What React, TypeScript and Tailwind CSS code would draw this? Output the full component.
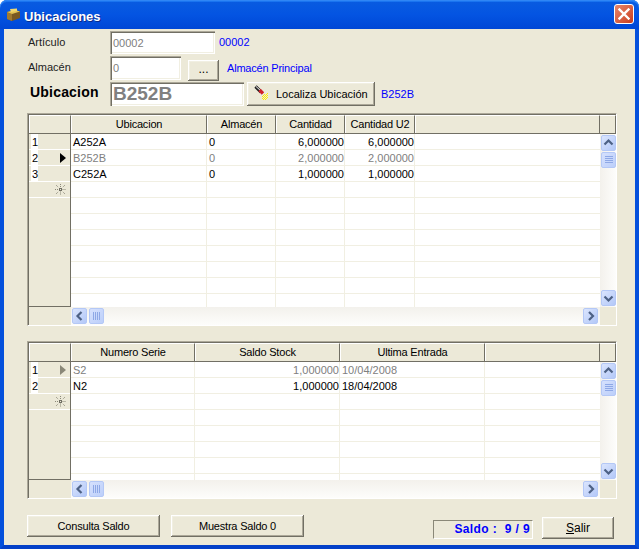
import React from "react";

const RAISED = "shadow-[inset_-1px_-1px_0_#716f64,inset_1px_1px_0_#ffffff,inset_-2px_-2px_0_#aca899,inset_2px_2px_0_#f1efe2]";
const SUNKEN = "shadow-[inset_1px_1px_0_#aca899,inset_2px_2px_0_#716f64,inset_-1px_-1px_0_#ffffff,inset_-2px_-2px_0_#f1efe2]";

type Col = { title: string; width: number; align?: "right" };
type Row = { cells: string[]; dim?: boolean };

function Chevron({ dir }: { dir: "up" | "down" | "left" | "right" }) {
  const d = {
    up: "M3.5 9.5 L7.5 5.5 L11.5 9.5",
    down: "M3.5 6.5 L7.5 10.5 L11.5 6.5",
    left: "M9.5 4 L5.5 8 L9.5 12",
    right: "M6 4 L10 8 L6 12",
  }[dir];
  return (
    <svg width="15" height="16" viewBox="0 0 15 16">
      <path d={d} fill="none" stroke="#4d6185" strokeWidth="2.2" />
    </svg>
  );
}

function ScrollBtn({ dir }: { dir: "up" | "down" | "left" | "right" }) {
  return (
    <div className="w-[15px] h-[16px] shrink-0 rounded-[2px] border border-[#b4c8f6] bg-gradient-to-br from-[#dbe5fd] to-[#b3c8f8] flex items-center justify-center overflow-hidden">
      <div className="shrink-0 -m-[1px]"><Chevron dir={dir} /></div>
    </div>
  );
}

function Thumb({ vertical }: { vertical?: boolean }) {
  return (
    <div className="w-[15px] h-[16px] shrink-0 rounded-[2px] border border-[#b4c8f6] bg-gradient-to-br from-[#d6e1fd] to-[#bccffa] flex items-center justify-center">
      <svg width="8" height="8" viewBox="0 0 8 8">
        {vertical
          ? [0, 2, 4, 6].map((y) => <rect key={y} x="0" y={y} width="8" height="1" fill="#8ea8e6" />)
          : [0, 2, 4, 6].map((x) => <rect key={x} x={x} y="0" width="1" height="8" fill="#8ea8e6" />)}
      </svg>
    </div>
  );
}

function Spark() {
  return (
    <svg width="11" height="11" viewBox="0 0 11 11">
      <g stroke="#8a8878" strokeWidth="1" strokeDasharray="1 1">
        <path d="M5.5 0V3.5M5.5 7.5V11M0 5.5H3.5M7.5 5.5H11M1 1L3.5 3.5M10 1L7.5 3.5M1 10L3.5 7.5M10 10L7.5 7.5" />
      </g>
      <rect x="4.5" y="4.5" width="2" height="2" fill="none" stroke="#716f64" strokeWidth="1" />
    </svg>
  );
}

function Indicator({ label, marker }: { label?: string; marker?: "black" | "gray" | "new" }) {
  return (
    <div className="h-[16px] shrink-0 border-b border-white flex items-center pl-[2px] pr-[4px] justify-between">
      {label ? <span className="bg-white w-[7px] h-[15px] leading-[16px] pl-[1px]">{label}</span> : <span />}
      {marker === "black" && <span className="w-0 h-0 border-y-[5px] border-y-transparent border-l-[6px] border-l-black" />}
      {marker === "gray" && <span className="w-0 h-0 border-y-[5px] border-y-transparent border-l-[6px] border-l-[#8a8878]" />}
      {marker === "new" && <Spark />}
    </div>
  );
}

function DataGrid({
  cols, rows, markers, height, emptyRows,
}: {
  cols: Col[]; rows: Row[]; markers: ("black" | "gray" | undefined)[]; height: string; emptyRows: number;
}) {
  const all: (Row | null)[] = [...rows, ...Array.from({ length: emptyRows }, () => null)];
  return (
    <div className={`${height} flex flex-col border border-t-[#aca899] border-l-[#aca899] border-r-white border-b-white bg-[#ece9d8]`}>
      <div className="flex-1 min-h-0 flex flex-col border-t border-l border-t-[#716f64] border-l-[#716f64]">
        {/* header */}
        <div className="h-[19px] shrink-0 flex border-b border-[#716f64] tracking-[-0.2px]">
          <div className="w-[42px] shrink-0 border-r border-[#716f64] border-l border-l-white border-t border-t-white" />
          {cols.map((c) => (
            <div key={c.title} className="shrink-0 border-r border-[#716f64] border-l border-l-white border-t border-t-white text-center leading-[17px] whitespace-nowrap overflow-hidden" style={{ width: c.width }}>
              {c.title}
            </div>
          ))}
          <div className="flex-1 border-r border-[#716f64] border-l border-l-white border-t border-t-white" />
          <div className="w-[16px] shrink-0 border-r border-[#716f64] border-t border-t-white" />
        </div>
        {/* body */}
        <div className="flex-1 min-h-0 flex">
          <div className="w-[42px] shrink-0 border-r border-b border-[#716f64] flex flex-col overflow-hidden">
            {rows.map((_, i) => <Indicator key={i} label={String(i + 1)} marker={markers[i]} />)}
            <Indicator marker="new" />
          </div>
          <div className="flex-1 min-w-0 bg-white overflow-hidden flex flex-col">
            {all.map((r, i) => (
              <div key={i} className={`h-[16px] shrink-0 flex border-b border-[#f1efe2] ${r?.dim ? "text-[#808080]" : "text-black"}`}>
                {cols.map((c, j) => (
                  <div key={j} className={`shrink-0 border-r border-[#f1efe2] leading-[17px] whitespace-nowrap ${c.align === "right" ? "text-right pr-0" : "pl-[2px]"}`} style={{ width: c.width }}>
                    {r ? r.cells[j] : ""}
                  </div>
                ))}
              </div>
            ))}
          </div>
          <div className="w-[16px] shrink-0 bg-gradient-to-r from-[#f3f1ec] to-[#fdfdfb] flex flex-col items-end pt-[1px] pb-[1px] gap-[1px]">
            <ScrollBtn dir="up" />
            <Thumb vertical />
            <div className="flex-1" />
            <ScrollBtn dir="down" />
          </div>
        </div>
        {/* horizontal scrollbar */}
        <div className="h-[18px] shrink-0 flex">
          <div className="w-[42px] shrink-0" />
          <div className="flex-1 bg-gradient-to-b from-[#f3f1ec] to-[#fdfdfb] flex items-center pl-[1px] pb-[1px]">
            <ScrollBtn dir="left" />
            <div className="w-[2px]" />
            <Thumb />
            <div className="flex-1" />
            <ScrollBtn dir="right" />
            <div className="w-[2px]" />
          </div>
          <div className="w-[16px] shrink-0" />
        </div>
      </div>
    </div>
  );
}

function Btn({ className, children }: { className: string; children: React.ReactNode }) {
  return <div className={`flex items-center justify-center bg-[#ece9d8] whitespace-nowrap ${RAISED} ${className}`}>{children}</div>;
}

export default function App() {
  return (
    <div className="w-[639px] h-[549px] bg-white flex flex-col overflow-hidden text-[11px] text-black" style={{ fontFamily: '"Liberation Sans", Arial, sans-serif' }}>
      {/* title bar */}
      <div className="h-[29px] shrink-0 rounded-t-[7px] bg-gradient-to-b from-[#0a5ce0] via-[#0454e2] to-[#0047d6] shadow-[inset_0_1px_0_#2f86f5,inset_0_2px_0_#1a74f0] flex items-center pl-[6px] pr-[6px]">
        <svg width="15" height="14" viewBox="0 0 15 14" className="shrink-0 mt-[1px]">
          <path d="M1 4 L9 2 L14 3.5 L14 10 L6 13 L1 11 Z" fill="#7a5a22" />
          <path d="M1 4 L6 6 L6 13 L1 11 Z" fill="#a07a30" />
          <path d="M1 4 L9 2 L14 3.5 L6 6 Z" fill="#e3c354" />
          <path d="M4 1 L11 0.5 L11 3 L5 4 Z" fill="#f0d870" />
        </svg>
        <span className="ml-[3px] mt-[4px] text-white font-bold text-[13px] [text-shadow:1px_1px_0_#0a2a8a]">Ubicaciones</span>
        <div className="flex-1" />
        <div className="w-[20px] h-[20px] -mr-[1px] -mt-[1px] rounded-[3px] border border-white bg-gradient-to-br from-[#e8866a] to-[#c93a18] flex items-center justify-center">
          <svg width="12" height="12" viewBox="0 0 12 12">
            <path d="M1.5 1.5 L10.5 10.5 M10.5 1.5 L1.5 10.5" stroke="#fff" strokeWidth="2.4" strokeLinecap="square" />
          </svg>
        </div>
      </div>

      {/* window body */}
      <div className="flex-1 min-h-0 border-x-4 border-b-4 border-x-[#0450dc] border-b-[#0340c8] bg-[#ece9d8] pl-[23px] pr-[18px] pt-[2px] flex flex-col">
        <div className="h-[23px] shrink-0 flex items-center">
          <span className="w-[83px] pl-[1px] text-[#222]">Artículo</span>
          <div className={`w-[105px] h-[23px] bg-white text-[#808080] leading-[24px] pl-[3px] ${SUNKEN}`}>00002</div>
          <span className="ml-[4px] text-[#0000ff]">00002</span>
        </div>
        <div className="h-[24px] shrink-0 mt-[2px] flex items-center">
          <span className="w-[83px] pl-[1px] pb-[2px] text-[#222]">Almacén</span>
          <div className={`w-[71px] h-[24px] bg-white text-[#808080] leading-[24px] pl-[3px] ${SUNKEN}`}>0</div>
          <Btn className="ml-[7px] w-[31px] h-[21px] mt-[4px] text-[12px] pb-[2px]">...</Btn>
          <span className="ml-[8px] text-[#0000ff] tracking-[-0.2px]">Almacén Principal</span>
        </div>
        <div className="h-[24px] shrink-0 mt-[2px] flex items-center">
          <span className="w-[83px] pl-[3px] pb-[4px] text-[14px] font-bold tracking-[0.2px]">Ubicacion</span>
          <div className={`w-[134px] h-[24px] bg-white text-[#808080] text-[19px] font-bold leading-[24px] pl-[3px] ${SUNKEN}`}>B252B</div>
          <Btn className="ml-[3px] w-[128px] h-[24px] justify-start pl-[7px]">
            <svg width="15" height="16" viewBox="0 0 15 16" className="shrink-0 mb-[2px]">
              <path d="M1.5 1.5 L7 7" stroke="#222" strokeWidth="3.2" />
              <path d="M2 1.5 L7.5 6.5" stroke="#fff" strokeWidth="1" />
              <path d="M5.5 5 L9 8.5" stroke="#d02028" strokeWidth="3.4" />
              {[[8,11],[10,11],[12,11],[9,10],[11,10],[13,10],[10,9],[12,9],[9,12],[11,12],[13,12],[10,13],[12,13],[11,14],[13,8],[8,13],[9,14]].map(([x, y]) => (
                <rect key={`${x}-${y}`} x={x} y={y} width="1" height="1" fill="#ffee00" />
              ))}
            </svg>
            <span className="ml-[7px]">Localiza Ubicación</span>
          </Btn>
          <span className="ml-[6px] text-[#0000ff]">B252B</span>
        </div>

        <div className="mt-[7px] shrink-0">
          <DataGrid
            height="h-[213px]"
            cols={[
              { title: "Ubicacion", width: 136 },
              { title: "Almacén", width: 69 },
              { title: "Cantidad", width: 69, align: "right" },
              { title: "Cantidad U2", width: 70, align: "right" },
            ]}
            rows={[
              { cells: ["A252A", "0", "6,000000", "6,000000"] },
              { cells: ["B252B", "0", "2,000000", "2,000000"], dim: true },
              { cells: ["C252A", "0", "1,000000", "1,000000"] },
            ]}
            markers={[undefined, "black", undefined]}
            emptyRows={9}
          />
        </div>
        <div className="mt-[15px] shrink-0">
          <DataGrid
            height="h-[158px]"
            cols={[
              { title: "Numero Serie", width: 124 },
              { title: "Saldo Stock", width: 145, align: "right" },
              { title: "Ultima Entrada", width: 145 },
            ]}
            rows={[
              { cells: ["S2", "1,000000", "10/04/2008"], dim: true },
              { cells: ["N2", "1,000000", "18/04/2008"] },
            ]}
            markers={["gray", undefined]}
            emptyRows={6}
          />
        </div>

        <div className="mt-[16px] shrink-0 flex items-start">
          <Btn className="w-[133px] h-[22px] tracking-[-0.2px]">Consulta Saldo</Btn>
          <Btn className="ml-[11px] w-[133px] h-[22px] tracking-[-0.2px]">Muestra Saldo 0</Btn>
          <div className="ml-[129px] mt-[5px] w-[100px] h-[19px] border border-t-[#8a8878] border-l-[#8a8878] border-r-white border-b-white text-right pr-[2px] text-[#0000ff] font-bold text-[12px] tracking-[0.4px] leading-[17px] whitespace-pre">Saldo :  9 / 9</div>
          <Btn className="ml-[9px] mt-[2px] w-[72px] h-[22px] text-[12px]"><span><span className="underline">S</span>alir</span></Btn>
        </div>
      </div>
    </div>
  );
}
